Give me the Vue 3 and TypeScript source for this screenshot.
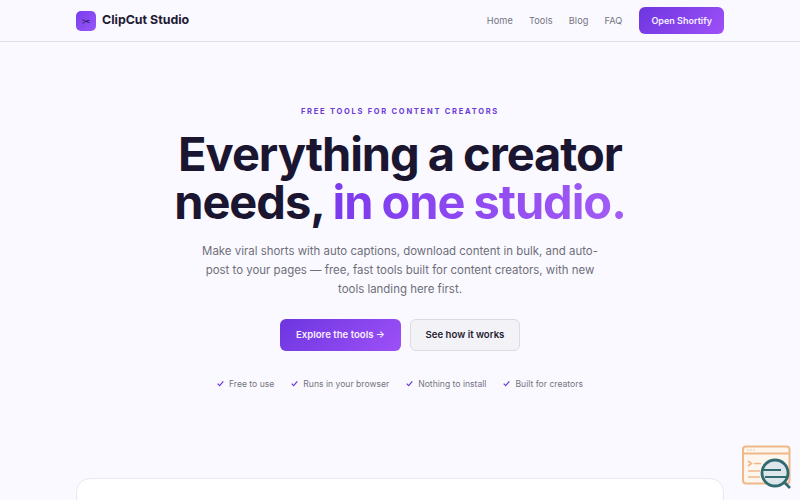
<template>
  <div class="page">
    <header class="topbar">
      <div class="brand">
        <span class="brand-mark">✂</span>
        <span class="brand-name">ClipCut Studio</span>
      </div>
      <nav class="nav">
        <a v-for="link in links" :key="link" class="nav-link">{{ link }}</a>
        <a class="nav-cta">Open Shortify</a>
      </nav>
    </header>

    <section class="hero">
      <p class="eyebrow">FREE TOOLS FOR CONTENT CREATORS</p>
      <h1 class="title">Everything a creator<br />needs, <span class="accent">in one studio.</span></h1>
      <p class="lead">
        Make viral shorts with auto captions, download content in bulk, and auto-post to your pages — free, fast tools
        built for content creators, with new tools landing here first.
      </p>
      <div class="actions">
        <a class="btn btn-primary">Explore the tools →</a>
        <a class="btn btn-ghost">See how it works</a>
      </div>
      <ul class="perks">
        <li v-for="perk in perks" :key="perk" class="perk">
          <svg class="check" viewBox="0 0 10 10" width="7" height="7">
            <path d="M1 5.2 L3.8 8 L9 2" fill="none" stroke="#6d3bd6" stroke-width="1.8" />
          </svg>
          {{ perk }}
        </li>
      </ul>
    </section>

    <div class="panel"></div>

    <svg class="float-badge" viewBox="0 0 52 44" width="52" height="44">
      <rect x="1" y="1.5" width="46.5" height="37" rx="3" fill="#fdf6ee" stroke="#f0b88a" stroke-width="2" />
      <path d="M1 8.5 H47.5" stroke="#f0b88a" stroke-width="2" />
      <path d="M5 5h1.5M8 5h1.5M11 5h1.5" stroke="#f0b88a" stroke-width="1.2" />
      <path d="M6 16 l3.5 2.5 -3.5 2.5" fill="none" stroke="#f0b88a" stroke-width="1.6" />
      <path d="M12 18.5h7M6 26h12M6 32h12" stroke="#f0b88a" stroke-width="1.6" />
      <path d="M43 38 L48 43" stroke="#2f6b70" stroke-width="2.6" />
      <circle cx="33" cy="28" r="13" fill="#dde6ea" stroke="#2f6b70" stroke-width="2.8" />
      <path d="M21 25 H39 M23 32 H45" stroke="#2f6b70" stroke-width="2" />
    </svg>
  </div>
</template>

<script setup lang="ts">
const links: string[] = ['Home', 'Tools', 'Blog', 'FAQ']
const perks: string[] = ['Free to use', 'Runs in your browser', 'Nothing to install', 'Built for creators']
</script>

<style>
html,
body {
  margin: 0;
  overflow: hidden;
}
</style>

<style scoped>
.page {
  position: relative;
  height: 500px;
  overflow: hidden;
  background: #faf9ff;
  font-family: Inter, 'Liberation Sans', sans-serif;
  color: #1a1530;
}

.topbar {
  height: 41px;
  padding: 0 76px;
  display: flex;
  align-items: center;
  justify-content: space-between;
  border-bottom: 1px solid #e3e2e9;
}

.brand {
  display: flex;
  align-items: center;
  gap: 6px;
}
.brand-mark {
  width: 20px;
  height: 20px;
  border-radius: 5px;
  background: linear-gradient(135deg, #7a3ceb, #9658f7);
  color: #2a1a55;
  font-size: 10px;
  display: flex;
  align-items: center;
  justify-content: center;
}
.brand-name {
  font-size: 12.4px;
  line-height: 18px;
  margin-bottom: 2px;
  font-weight: 700;
  color: #1f1b33;
}

.nav {
  display: flex;
  align-items: center;
  gap: 16px;
}
.nav-link {
  font-size: 9.2px;
  letter-spacing: 0.1px;
  color: #74747f;
}
.nav-cta {
  margin-left: 1px;
  padding: 0 12px;
  height: 27px;
  display: flex;
  align-items: center;
  border-radius: 6px;
  background: linear-gradient(135deg, #6d36e0, #9e50f7);
  color: #f6f0ff;
  font-size: 9px;
  font-weight: 600;
}

.hero {
  display: flex;
  flex-direction: column;
  align-items: center;
  text-align: center;
}
.eyebrow {
  margin: 65px 0 0;
  font-size: 7.5px;
  line-height: 10px;
  font-weight: 700;
  letter-spacing: 1.75px;
  color: #6d3bd6;
}
.title {
  margin: 13px 0 0;
  font-size: 47px;
  line-height: 48px;
  font-weight: 700;
  letter-spacing: -1.05px;
  word-spacing: -1px;
  color: #1a1530;
}
.accent {
  background: linear-gradient(90deg, #7c3aed, #a35cf5);
  -webkit-background-clip: text;
  background-clip: text;
  color: transparent;
}
.lead {
  margin: 16px 0 0;
  width: 402px;
  font-size: 11.45px;
  line-height: 19.2px;
  color: #6e6e7a;
}
.actions {
  display: flex;
  gap: 9px;
  margin-top: 19px;
}
.btn {
  height: 32px;
  display: flex;
  align-items: center;
  justify-content: center;
  border-radius: 6px;
  font-size: 9.6px;
  font-weight: 600;
  box-sizing: border-box;
}
.btn-primary {
  width: 121px;
  background: linear-gradient(135deg, #6d36e0, #9e50f7);
  color: #f6f0ff;
}
.btn-ghost {
  width: 110px;
  background: #f3f2f7;
  border: 1px solid #dcdbe3;
  color: #1f1b33;
}
.perks {
  list-style: none;
  margin: 28px 0 0;
  padding: 0;
  display: flex;
  gap: 17px;
}
.perk {
  display: flex;
  align-items: center;
  gap: 5px;
  font-size: 8.6px;
  color: #74747f;
}
.check {
  flex: none;
}

.panel {
  position: absolute;
  left: 76px;
  top: 478px;
  width: 648px;
  height: 60px;
  box-sizing: border-box;
  background: #fff;
  border: 1px solid #e9e8ee;
  border-radius: 14px;
}
.float-badge {
  position: absolute;
  left: 742px;
  top: 445px;
}
</style>
